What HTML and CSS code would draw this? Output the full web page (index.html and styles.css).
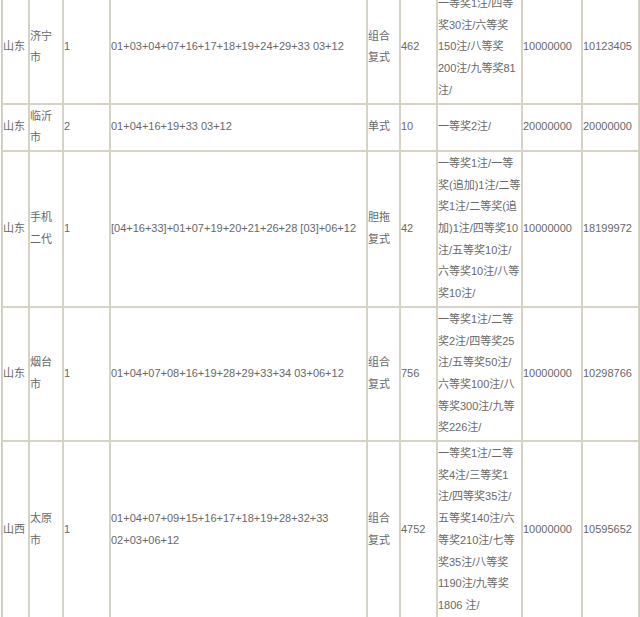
FILE: index.html
```html
<!DOCTYPE html>
<html lang="zh">
<head>
<meta charset="utf-8">
<link rel="stylesheet" href="styles.css">
</head>
<body>
<table class="draws">
  <colgroup>
    <col class="c-prov"><col class="c-city"><col class="c-num"><col class="c-code"><col class="c-type"><col class="c-cnt"><col class="c-prize"><col class="c-bonus"><col class="c-total">
  </colgroup>
  <tbody>
    <tr>
      <td>山东</td><td>济宁市</td><td>1</td>
      <td>01+03+04+07+16+17+18+19+24+29+33 03+12</td>
      <td>组合复式</td><td>462</td>
      <td>一等奖1注/四等奖30注/六等奖150注/八等奖200注/九等奖81注/</td>
      <td>10000000</td><td>10123405</td>
    </tr>
    <tr>
      <td>山东</td><td>临沂市</td><td>2</td>
      <td>01+04+16+19+33 03+12</td>
      <td>单式</td><td>10</td>
      <td>一等奖2注/</td>
      <td>20000000</td><td>20000000</td>
    </tr>
    <tr>
      <td>山东</td><td>手机二代</td><td>1</td>
      <td>[04+16+33]+01+07+19+20+21+26+28 [03]+06+12</td>
      <td>胆拖复式</td><td>42</td>
      <td>一等奖1注/一等奖(追加)1注/二等奖1注/二等奖(追加)1注/四等奖10注/五等奖10注/六等奖10注/八等奖10注/</td>
      <td>10000000</td><td>18199972</td>
    </tr>
    <tr>
      <td>山东</td><td>烟台市</td><td>1</td>
      <td>01+04+07+08+16+19+28+29+33+34 03+06+12</td>
      <td>组合复式</td><td>756</td>
      <td>一等奖1注/二等奖2注/四等奖25注/五等奖50注/六等奖100注/八等奖300注/九等奖226注/</td>
      <td>10000000</td><td>10298766</td>
    </tr>
    <tr>
      <td>山西</td><td>太原市</td><td>1</td>
      <td>01+04+07+09+15+16+17+18+19+28+32+33 02+03+06+12</td>
      <td>组合复式</td><td>4752</td>
      <td>一等奖1注/二等奖4注/三等奖1注/四等奖35注/五等奖140注/六等奖210注/七等奖35注/八等奖1190注/九等奖1806 注/</td>
      <td>10000000</td><td>10595652</td>
    </tr>
  </tbody>
</table>
</body>
</html>
```

FILE: styles.css
```css
html, body {
  margin: 0;
  padding: 0;
  background: #ffffff;
}

.draws {
  margin: -10px 0 0 1px;
  width: 639px;
  table-layout: fixed;
  border-collapse: separate;
  border-spacing: 0;
  border: 1px solid #cfccbe;
  font-family: "Liberation Sans", Arial, "Noto Sans CJK SC", sans-serif;
  font-size: 11px;
  line-height: 21.7px;
  color: #686868;
}

.draws td {
  border: 1px solid #d6d3c6;
  padding: 1px 0 1px 0;
  vertical-align: middle;
  text-align: left;
  word-break: normal;
  overflow-wrap: anywhere;
}

.c-prov { width: 27px; }
.c-city { width: 34px; }
.c-num { width: 47px; }
.c-code { width: 257px; }
.c-type { width: 33px; }
.c-cnt { width: 37px; }
.c-prize { width: 85px; }
.c-bonus { width: 60px; }
.c-total { width: 57px; }
```
